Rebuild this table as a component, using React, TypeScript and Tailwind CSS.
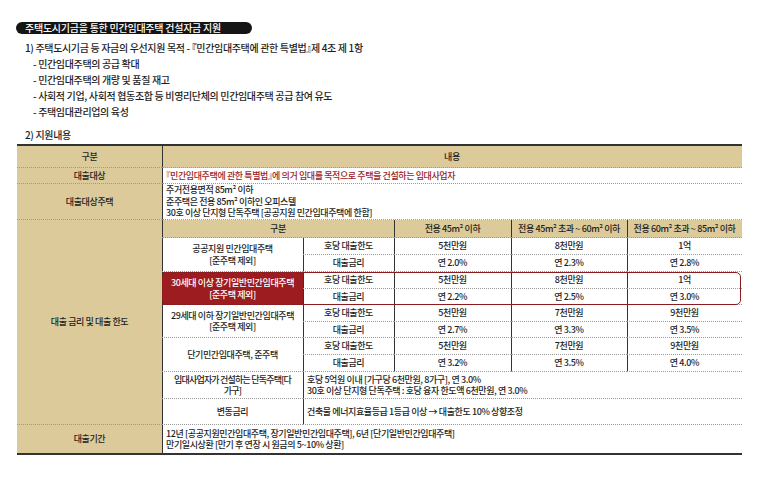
import React from "react"

const goals = [
  "민간임대주택의 공급 확대",
  "민간임대주택의 개량 및 품질 재고",
  "사회적 기업, 사회적 협동조합 등 비영리단체의 민간임대주택 공급 참여 유도",
  "주택임대관리업의 육성",
]

// 대출 금리 및 한도 rows (grid rows 5 ~ 12)
const loanGroups = [
  {
    name: ["공공지원 민간임대주택", "[준주택 제외]"],
    rowA: "row-start-5",
    rowB: "row-start-6",
    limit: ["5천만원", "8천만원", "1억"],
    rate: ["연 2.0%", "연 2.3%", "연 2.8%"],
    highlight: false,
  },
  {
    name: ["30세대 이상 장기일반민간임대주택", "[준주택 제외]"],
    rowA: "row-start-7",
    rowB: "row-start-8",
    limit: ["5천만원", "8천만원", "1억"],
    rate: ["연 2.2%", "연 2.5%", "연 3.0%"],
    highlight: true,
  },
  {
    name: ["29세대 이하 장기일반민간임대주택", "[준주택 제외]"],
    rowA: "row-start-9",
    rowB: "row-start-10",
    limit: ["5천만원", "7천만원", "9천만원"],
    rate: ["연 2.7%", "연 3.3%", "연 3.5%"],
    highlight: false,
  },
  {
    name: ["단기민간임대주택, 준주택"],
    rowA: "row-start-11",
    rowB: "row-start-12",
    limit: ["5천만원", "7천만원", "9천만원"],
    rate: ["연 3.2%", "연 3.5%", "연 4.0%"],
    highlight: false,
  },
]

const valueCols = ["col-start-4", "col-start-5", "col-start-6"]

// lines: dotted row separator, dark column separator
const hr = "border-b border-dotted border-[#9a9a9a]"
const vl = "shadow-[inset_1px_0_0_#333]"
const gold = "bg-[#dcca9b]"

function Cell({ className = "", children }: { className?: string; children?: React.ReactNode }) {
  return <div className={`flex items-center justify-center text-center ${className}`}>{children}</div>
}

export default function App() {
  return (
    <div className="w-[760px] h-[481px] overflow-hidden bg-white text-[#1e1e1e] font-[family-name:'Noto_Sans_CJK_KR',sans-serif] font-medium [font-feature-settings:'halt']">
      {/* Title */}
      <div className="pt-[22px] pl-[16px]">
        <div className="w-[236px] h-[12px] rounded-full bg-[#151515] pl-[9px] text-[10px] leading-[12px] tracking-[-0.25px] text-white">
          주택도시기금을 통한 민간임대주택 건설자금 지원
        </div>
      </div>

      {/* Purpose */}
      <div className="mt-[6px] pl-[25px] text-[10px] leading-[16px] tracking-[-0.35px]">
        <p>1) 주택도시기금 등 자금의 우선지원 목적 - 『민간임대주택에 관한 특별법』제 4조 제 1항</p>
        <ul className="pl-[8px]">
          {goals.map((g) => (
            <li key={g}>- {g}</li>
          ))}
        </ul>
        <p className="mt-[7px]">2) 지원내용</p>
      </div>

      {/* Support table */}
      <div className="ml-[17px] mt-[1px] w-[725px] border-y-2 border-[#333] grid grid-cols-[145px_141px_91px_117px_116px_115px] grid-rows-[22px_16px_36px_18px_17px_17px_17px_16px_17px_16px_17px_17px_27px_26px_28px] text-[9px] leading-[11.5px] tracking-[-0.4px]">
        {/* header */}
        <Cell className={`col-start-1 row-start-1 ${gold} ${hr}`}>구분</Cell>
        <Cell className={`col-start-2 col-span-5 row-start-1 ${gold} ${hr} ${vl}`}>내용</Cell>

        {/* 대출대상 */}
        <Cell className={`col-start-1 row-start-2 ${gold} ${hr}`}>대출대상</Cell>
        <Cell className={`col-start-2 col-span-5 row-start-2 !justify-start pl-[4px] text-[#9b2226] ${hr} ${vl}`}>
          『민간임대주택에 관한 특별법』에 의거 임대를 목적으로 주택을 건설하는 임대사업자
        </Cell>

        {/* 대출대상주택 */}
        <Cell className={`col-start-1 row-start-3 ${gold} ${hr}`}>대출대상주택</Cell>
        <Cell className={`col-start-2 col-span-5 row-start-3 flex-col !items-start pl-[4px] text-left ${hr} ${vl}`}>
          <span>주거전용면적 85m² 이하</span>
          <span>준주택은 전용 85m² 이하인 오피스텔</span>
          <span>30호 이상 단지형 단독주택 [공공지원 민간임대주택에 한함]</span>
        </Cell>

        {/* 대출 금리 및 대출 한도 */}
        <Cell className={`col-start-1 row-start-4 row-span-11 ${gold} ${hr}`}>대출 금리 및 대출 한도</Cell>
        <Cell className={`col-start-2 col-span-2 row-start-4 ${gold} ${hr} ${vl}`}>구분</Cell>
        <Cell className={`col-start-4 row-start-4 ${gold} ${hr} ${vl}`}>전용 45m² 이하</Cell>
        <Cell className={`col-start-5 row-start-4 ${gold} ${hr} ${vl}`}>전용 45m² 초과 ~ 60m² 이하</Cell>
        <Cell className={`col-start-6 row-start-4 ${gold} ${hr} ${vl}`}>전용 60m² 초과 ~ 85m² 이하</Cell>

        {loanGroups.map((g) => (
          <React.Fragment key={g.rowA}>
            <Cell
              className={`col-start-2 row-span-2 flex-col ${g.rowA} ${vl} ${
                g.highlight ? "bg-[#9c1c20] text-white" : hr
              }`}
            >
              {g.name.map((n) => (
                <span key={n}>{n}</span>
              ))}
            </Cell>
            <Cell className={`col-start-3 ${g.rowA} ${hr} ${vl}`}>호당 대출한도</Cell>
            <Cell className={`col-start-3 ${g.rowB} ${hr} ${vl}`}>대출금리</Cell>
            {g.limit.map((v, i) => (
              <Cell key={"l" + i} className={`${valueCols[i]} ${g.rowA} ${hr} ${vl}`}>
                {v}
              </Cell>
            ))}
            {g.rate.map((v, i) => (
              <Cell key={"r" + i} className={`${valueCols[i]} ${g.rowB} ${hr} ${vl}`}>
                {v}
              </Cell>
            ))}
          </React.Fragment>
        ))}

        {/* 단독주택 */}
        <Cell className={`col-start-2 row-start-13 flex-col whitespace-nowrap tracking-[-0.8px] ${hr} ${vl}`}>
          <span>임대사업자가 건설하는 단독주택[다</span>
          <span>가구]</span>
        </Cell>
        <Cell className={`col-start-3 col-span-4 row-start-13 flex-col !items-start pl-[4px] text-left ${hr} ${vl}`}>
          <span>호당 5억원 이내 [가구당 6천만원, 8가구], 연 3.0%</span>
          <span>30호 이상 단지형 단독주택 : 호당 융자 한도액 6천만원, 연 3.0%</span>
        </Cell>

        {/* 변동금리 */}
        <Cell className={`col-start-2 row-start-14 ${hr} ${vl}`}>변동금리</Cell>
        <Cell className={`col-start-3 col-span-4 row-start-14 !justify-start pl-[4px] ${hr} ${vl}`}>
          건축물 에너지효율등급 1등급 이상 → 대출한도 10% 상향조정
        </Cell>

        {/* 대출기간 */}
        <Cell className={`col-start-1 row-start-15 ${gold}`}>대출기간</Cell>
        <Cell className={`col-start-2 col-span-5 row-start-15 flex-col !items-start pl-[4px] text-left ${vl}`}>
          <span>12년 [공공지원민간임대주택, 장기일반민간임대주택], 6년 [단기일반민간임대주택]</span>
          <span>만기일시상환 [만기 후 연장 시 원금의 5~10% 상환]</span>
        </Cell>

        {/* highlight outline over the 30세대 row */}
        <div className="col-start-2 col-span-5 row-start-7 row-span-2 mr-[1px] rounded-[5px] border-[1.5px] border-[#8d1c20] pointer-events-none z-10" />
      </div>
    </div>
  )
}
